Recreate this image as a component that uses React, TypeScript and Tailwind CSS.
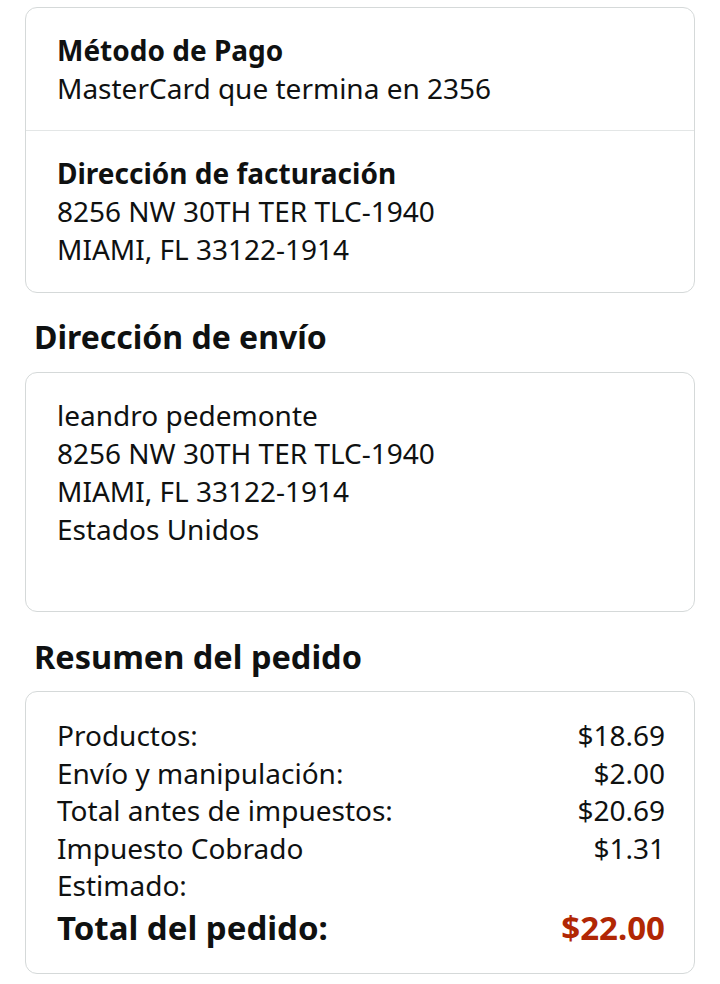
import React from 'react';

const rows = [
  { label: 'Productos:', value: '$18.69' },
  { label: 'Envío y manipulación:', value: '$2.00' },
  { label: 'Total antes de impuestos:', value: '$20.69' },
  { label: 'Impuesto Cobrado Estimado:', value: '$1.31' },
];

export default function App() {
  return (
    <div
      className="min-h-[984px] bg-white px-[25px] pt-[7px] text-[#0f1111]"
      style={{ fontFamily: '"Noto Sans", "Open Sans", sans-serif' }}
    >
      {/* Payment + billing */}
      <div className="rounded-[12px] border border-[#d5d9d9]">
        <div className="px-[31px] pt-[23px] pb-[23px] text-[28px] leading-[38px]">
          <p className="font-bold">Método de Pago</p>
          <p>MasterCard que termina en 2356</p>
        </div>
        <div className="border-t border-[#e3e6e6] px-[31px] pt-[23px] pb-[24px] text-[28px] leading-[38px]">
          <p className="font-bold">Dirección de facturación</p>
          <p>8256 NW 30TH TER TLC-1940</p>
          <p>MIAMI, FL 33122-1914</p>
        </div>
      </div>

      <h2 className="mt-[26px] mb-[17px] px-[9px] text-[32px] font-bold leading-[36px]">Dirección de envío</h2>

      <div className="rounded-[12px] border border-[#d5d9d9] px-[31px] pt-[23px] pb-[63px] text-[28px] leading-[38px]">
        <p>leandro pedemonte</p>
        <p>8256 NW 30TH TER TLC-1940</p>
        <p>MIAMI, FL 33122-1914</p>
        <p>Estados Unidos</p>
      </div>

      <h2 className="mt-[27px] mb-[16px] px-[9px] text-[32.5px] font-bold leading-[36px]">Resumen del pedido</h2>

      <div className="rounded-[12px] border border-[#d5d9d9] pl-[31px] pr-[29px] pt-[25px] pb-[24px] text-[28px] leading-[37.5px]">
        {rows.map((r) => (
          <div key={r.label} className="flex justify-between">
            <span className="max-w-[355px]">{r.label}</span>
            <span>{r.value}</span>
          </div>
        ))}
        <div className="mt-[2px] flex justify-between text-[33px] font-bold leading-[42px]">
          <span>Total del pedido:</span>
          <span className="text-[#b12704]">$22.00</span>
        </div>
      </div>
    </div>
  );
}
